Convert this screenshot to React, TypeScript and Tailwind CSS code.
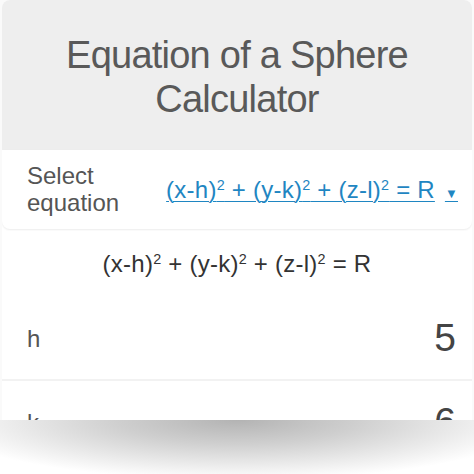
import React from "react";

const font = { fontFamily: '"Liberation Sans", Arial, sans-serif' };

const Equation: React.FC = () => (
  <>
    (x-h)<sup className="text-[0.6em]">2</sup> + (y-k)<sup className="text-[0.6em]">2</sup> + (z-l)
    <sup className="text-[0.6em]">2</sup> = R
  </>
);

const App: React.FC = () => {
  return (
    <div className="flex h-[474px] w-[474px] flex-col overflow-hidden bg-[#fafafa]" style={font}>
      <div className="mx-[2px] flex h-[420px] flex-col overflow-hidden rounded-t-lg bg-white">
        <header className="flex h-[150px] shrink-0 items-center justify-center bg-[#eeeeee] pt-[3px]">
          <h1 className="text-center text-[38px] leading-[44px] tracking-[-0.02em] text-[#595959]">
            Equation of a Sphere
            <br />
            Calculator
          </h1>
        </header>

        <div className="flex h-[79px] shrink-0 items-center justify-between rounded-b-lg bg-white pl-[25px] pr-[14px] shadow-[0_1px_2px_rgba(0,0,0,0.08)]">
          <p className="pb-[2px] text-[24px] leading-[27px] text-[#555555]">
            Select
            <br />
            equation
          </p>
          <p className="whitespace-nowrap text-[24px] tracking-[0.01em] text-[#1f86c2] underline decoration-1 underline-offset-[3px]">
            <Equation />
            <span className="ml-[10px] text-[13px]">▼</span>
          </p>
        </div>

        <div className="mt-[2px] flex h-[67px] shrink-0 items-center justify-center bg-white pb-[2px]">
          <p className="whitespace-nowrap text-[24px] tracking-[0.01em] text-[#333333]">
            <Equation />
          </p>
        </div>

        <div className="flex h-[83px] shrink-0 items-center justify-between border-b-2 border-[#f2f2f2] bg-white pl-[25px] pr-[16px]">
          <span className="text-[24px] text-[#555555]">h</span>
          <span className="text-[39px] text-[#444444]">5</span>
        </div>

        <div className="flex h-[83px] shrink-0 items-center justify-between bg-white pl-[25px] pr-[16px]">
          <span className="text-[24px] text-[#555555]">k</span>
          <span className="text-[39px] text-[#444444]">6</span>
        </div>
      </div>

      <div className="h-[54px] bg-[radial-gradient(ellipse_300px_60px_at_50%_0%,#b3b3b3_0%,#cfcfcf_40%,#ffffff_100%)]" />
    </div>
  );
};

export default App;
